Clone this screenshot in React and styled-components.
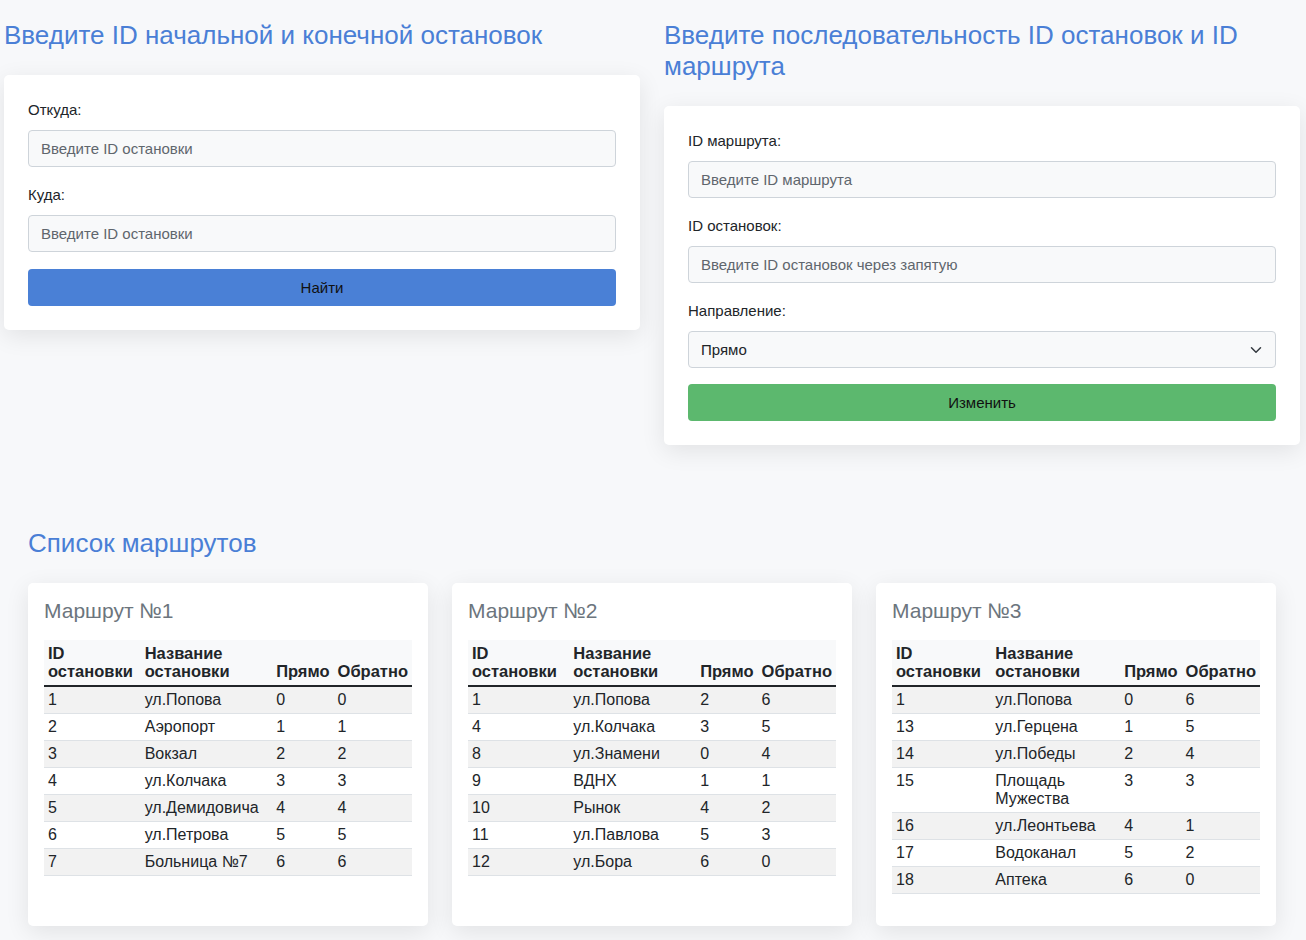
import React from 'react'
import styled, { createGlobalStyle } from 'styled-components'

const GlobalStyle = createGlobalStyle`
body {
    margin: 0;
    background: #f7f8fa;
    font-family: "Liberation Sans", Arial, Helvetica, sans-serif;
    color: #212529;
}
`

const Page = styled.div`
display: flex;
flex-direction: column;
`

const Top = styled.div`
display: grid;
grid-template-columns: 636px 636px;
column-gap: 24px;
padding: 20px 0 0 4px;
align-items: start;
`

const Column = styled.div`
display: flex;
flex-direction: column;
`

const Heading = styled.h2`
margin: 0 0 24px;
font-size: 26px;
line-height: 31px;
font-weight: 400;
color: #4a7fd6;
`

const Card = styled.div`
background: #fff;
border-radius: 5px;
box-shadow: 0 6px 24px rgba(0, 0, 0, 0.09);
padding: ${p => p.$pad || 24}px;
display: flex;
flex-direction: column;
`

const Label = styled.label`
font-size: 15px;
line-height: 21px;
margin-bottom: 10px;
`

const Input = styled.input`
box-sizing: border-box;
height: 37px;
width: 100%;
margin-bottom: 17px;
padding: 0 12px;
font: inherit;
font-size: 15px;
color: #212529;
background: #f8f9fa;
border: 1px solid #ced4da;
border-radius: 4px;
&::placeholder {
    color: #5f666d;
}
`

const SelectWrap = styled.div`
position: relative;
margin-bottom: 16px;
`

const Select = styled.select`
box-sizing: border-box;
appearance: none;
height: 37px;
width: 100%;
padding: 0 12px;
font: inherit;
font-size: 15px;
color: #212529;
background: #f8f9fa;
border: 1px solid #ced4da;
border-radius: 4px;
`

const Chevron = styled.svg`
position: absolute;
right: 14px;
top: 13px;
pointer-events: none;
`

const Button = styled.button`
height: 37px;
width: 100%;
border: none;
border-radius: 4px;
background: ${p => p.$color};
color: #111;
font: inherit;
font-size: 15px;
cursor: pointer;
`

const Routes = styled.div`
padding: 83px 28px 15px;
display: flex;
flex-direction: column;
`

const RoutesHeading = styled(Heading)`
margin-bottom: 24px;
`

const RouteGrid = styled.div`
display: grid;
grid-template-columns: repeat(3, 400px);
column-gap: 24px;
`

const RouteTitle = styled.h3`
margin: 0 0 17px;
font-size: 21px;
line-height: 24px;
font-weight: 400;
color: #6c757d;
`

const Table = styled.table`
width: 100%;
border-collapse: collapse;
margin-bottom: 16px;
font-size: 16px;
line-height: 18px;
`

const Th = styled.th`
text-align: left;
vertical-align: bottom;
padding: 4px 4px 5px;
background: #f8f9fa;
border-bottom: 2px solid #212529;
font-weight: 700;
font-size: 16.5px;
`

const Row = styled.tr`
background: ${p => (p.$striped ? '#f2f2f2' : '#fff')};
`

const Td = styled.td`
vertical-align: top;
padding: 4px;
border-bottom: 1px solid #dee2e6;
`

const routes = [
    {
        name: 'Маршрут №1',
        stops: [
            [1, 'ул.Попова', 0, 0],
            [2, 'Аэропорт', 1, 1],
            [3, 'Вокзал', 2, 2],
            [4, 'ул.Колчака', 3, 3],
            [5, 'ул.Демидовича', 4, 4],
            [6, 'ул.Петрова', 5, 5],
            [7, 'Больница №7', 6, 6],
        ],
    },
    {
        name: 'Маршрут №2',
        stops: [
            [1, 'ул.Попова', 2, 6],
            [4, 'ул.Колчака', 3, 5],
            [8, 'ул.Знамени', 0, 4],
            [9, 'ВДНХ', 1, 1],
            [10, 'Рынок', 4, 2],
            [11, 'ул.Павлова', 5, 3],
            [12, 'ул.Бора', 6, 0],
        ],
    },
    {
        name: 'Маршрут №3',
        stops: [
            [1, 'ул.Попова', 0, 6],
            [13, 'ул.Герцена', 1, 5],
            [14, 'ул.Победы', 2, 4],
            [15, 'Площадь Мужества', 3, 3],
            [16, 'ул.Леонтьева', 4, 1],
            [17, 'Водоканал', 5, 2],
            [18, 'Аптека', 6, 0],
        ],
    },
]

function RouteCard({ route }) {
    return (
        <Card $pad={16}>
            <RouteTitle>{route.name}</RouteTitle>
            <Table>
                <thead>
                    <tr>
                        <Th>ID остановки</Th>
                        <Th>Название остановки</Th>
                        <Th>Прямо</Th>
                        <Th>Обратно</Th>
                    </tr>
                </thead>
                <tbody>
                    {route.stops.map((s, i) => (
                        <Row key={i} $striped={i % 2 === 0}>
                            {s.map((v, j) => <Td key={j}>{v}</Td>)}
                        </Row>
                    ))}
                </tbody>
            </Table>
        </Card>
    )
}

export default function App() {
    return (
        <>
            <GlobalStyle />
            <Page>
                <Top>
                    <Column>
                        <Heading>Введите ID начальной и конечной остановок</Heading>
                        <Card>
                            <Label>Откуда:</Label>
                            <Input placeholder="Введите ID остановки" />
                            <Label>Куда:</Label>
                            <Input placeholder="Введите ID остановки" />
                            <Button $color="#4a80d6">Найти</Button>
                        </Card>
                    </Column>
                    <Column>
                        <Heading>Введите последовательность ID остановок и ID маршрута</Heading>
                        <Card>
                            <Label>ID маршрута:</Label>
                            <Input placeholder="Введите ID маршрута" />
                            <Label>ID остановок:</Label>
                            <Input placeholder="Введите ID остановок через запятую" />
                            <Label>Направление:</Label>
                            <SelectWrap>
                                <Select defaultValue="forward">
                                    <option value="forward">Прямо</option>
                                    <option value="back">Обратно</option>
                                </Select>
                                <Chevron width="12" height="12" viewBox="0 0 16 16">
                                    <path d="M2 5l6 6 6-6" fill="none" stroke="#343a40" strokeWidth="2" strokeLinecap="round" strokeLinejoin="round" />
                                </Chevron>
                            </SelectWrap>
                            <Button $color="#5cb86e">Изменить</Button>
                        </Card>
                    </Column>
                </Top>
                <Routes>
                    <RoutesHeading>Список маршрутов</RoutesHeading>
                    <RouteGrid>
                        {routes.map(r => <RouteCard key={r.name} route={r} />)}
                    </RouteGrid>
                </Routes>
            </Page>
        </>
    )
}
